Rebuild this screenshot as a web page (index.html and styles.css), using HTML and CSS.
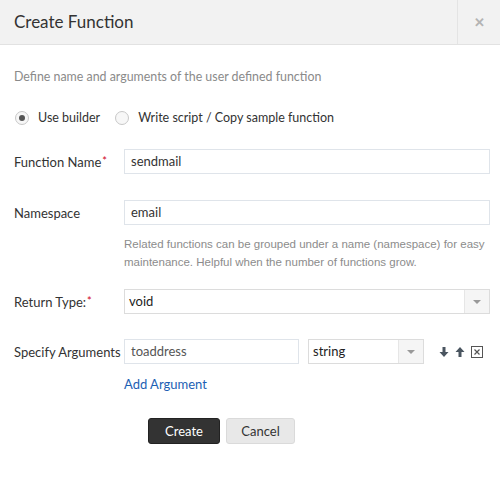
FILE: index.html
```html
<!DOCTYPE html>
<html lang="en">

<head>
  <meta charset="UTF-8" />
  <title>Create Function</title>
  <link rel="stylesheet" href="styles.css">
</head>

<body>

  <div class="dialog">
    <div class="dialog-header">
      <div class="dialog-title">Create Function</div>
      <div class="dialog-close">&#x2715;</div>
    </div>

    <div class="dialog-body">
      <p class="intro">Define name and arguments of the user defined function</p>

      <div class="radio-row">
        <label class="radio checked"><span class="radio-dot"></span>Use builder</label>
        <label class="radio"><span class="radio-dot"></span>Write script / Copy sample function</label>
      </div>

      <div class="field-row row-name">
        <div class="field-label">Function Name<span class="req">*</span></div>
        <div class="field-ctrl">
          <div class="text-input">sendmail</div>
        </div>
      </div>

      <div class="field-row row-ns">
        <div class="field-label">Namespace</div>
        <div class="field-ctrl">
          <div class="text-input">email</div>
          <div class="help">Related functions can be grouped under a name (namespace) for easy maintenance. Helpful when the number of functions grow.</div>
        </div>
      </div>

      <div class="field-row row-return">
        <div class="field-label">Return Type:<span class="req">*</span></div>
        <div class="field-ctrl">
          <div class="select">
            <span class="select-value">void</span>
            <span class="select-arrow"></span>
          </div>
        </div>
      </div>

      <div class="field-row row-args">
        <div class="field-label">Specify Arguments</div>
        <div class="field-ctrl">
          <div class="arg-line">
            <div class="text-input arg-name">toaddress</div>
            <div class="select arg-type">
              <span class="select-value">string</span>
              <span class="select-arrow"></span>
            </div>
            <div class="arg-tools">
              <svg width="10" height="10" viewBox="0 0 10 10"><path d="M3.5 0h3v5h3l-4.5 5-4.5-5h3z" fill="#4a5560"/></svg>
              <svg width="10" height="10" viewBox="0 0 10 10"><path d="M3.5 10h3v-5h3l-4.5-5-4.5 5h3z" fill="#4a5560"/></svg>
              <svg width="12" height="12" viewBox="0 0 12 12"><rect x="0.5" y="0.5" width="11" height="11" fill="#fff" stroke="#555"/><path d="M3.5 3.5l5 5M8.5 3.5l-5 5" stroke="#555" stroke-width="1.2"/></svg>
            </div>
          </div>
          <a class="add-arg" href="#">Add Argument</a>
        </div>
      </div>

      <div class="actions">
        <button class="btn btn-primary">Create</button>
        <button class="btn btn-default">Cancel</button>
      </div>
    </div>
  </div>

</body>

</html>
```

FILE: styles.css
```css
body {
  margin: 0;
  background: #fff;
  font-family: Lato, 'Open Sans', sans-serif;
  color: #333;
}

.dialog {
  width: 500px;
}

.dialog-header {
  display: flex;
  height: 44px;
  background: #f2f2f2;
  border-bottom: 1px solid #e2e2e2;
}

.dialog-title {
  flex: 1;
  padding-left: 14px;
  line-height: 44px;
  font-size: 17px;
  color: #333;
}

.dialog-close {
  width: 42px;
  border-left: 1px solid #e4e4e4;
  text-align: center;
  line-height: 44px;
  font-size: 13px;
  font-weight: bold;
  color: #b4b4b4;
}

.dialog-body {
  padding: 0 10px 0 14px;
}

.intro {
  margin: 24px 0 0;
  font-size: 12.4px;
  color: #8a8a8a;
}

.radio-row {
  display: flex;
  gap: 14px;
  margin-top: 26px;
  font-size: 12.5px;
}

.radio {
  display: flex;
  align-items: center;
  gap: 9px;
}

.radio-dot {
  width: 14px;
  height: 14px;
  border-radius: 50%;
  border: 1px solid #c8c8c8;
  background: #f7f7f7;
  box-sizing: border-box;
  position: relative;
  margin-left: 1px;
}

.radio.checked .radio-dot::after {
  content: "";
  position: absolute;
  left: 3px;
  top: 3px;
  width: 6px;
  height: 6px;
  border-radius: 50%;
  background: #555;
}

.field-row {
  display: flex;
}

.row-name {
  margin-top: 24px;
}

.row-ns {
  margin-top: 26px;
}

.row-return {
  margin-top: 18px;
}

.row-args {
  margin-top: 25px;
}

.field-label {
  width: 110px;
  flex: none;
  font-size: 13px;
  padding-top: 5px;
  white-space: nowrap;
}

.req {
  color: #d0021b;
  font-size: 11px;
  vertical-align: top;
  margin-left: 1px;
}

.field-ctrl {
  flex: 1;
}

.text-input {
  height: 25px;
  box-sizing: border-box;
  border: 1px solid #dfe4ea;
  padding: 0 6px;
  line-height: 23px;
  font-size: 13px;
  color: #333;
  background: #fff;
}

.help {
  margin-top: 10px;
  font-family: 'Liberation Sans', Arial, sans-serif;
  font-size: 11.5px;
  line-height: 18px;
  color: #8c8c8c;
}

.select {
  display: flex;
  height: 25px;
  box-sizing: border-box;
  border: 1px solid #dcdcdc;
  background: #fff;
}

.select-value {
  flex: 1;
  padding: 0 4px;
  line-height: 23px;
  font-size: 13px;
  color: #222;
}

.select-arrow {
  width: 24px;
  border-left: 1px solid #e6e6e6;
  background: #f5f5f5;
  position: relative;
}

.select-arrow::after {
  content: "";
  position: absolute;
  left: 8px;
  top: 10px;
  border-left: 4px solid transparent;
  border-right: 4px solid transparent;
  border-top: 4px solid #999;
}

.arg-line {
  display: flex;
  align-items: center;
}

.arg-name {
  width: 175px;
  color: #555;
}

.arg-type {
  width: 116px;
  margin-left: 9px;
}

.arg-tools {
  display: flex;
  align-items: center;
  gap: 6px;
  margin-left: 15px;
}

.add-arg {
  display: inline-block;
  margin-top: 12px;
  font-size: 13px;
  color: #1c5fb4;
  text-decoration: none;
}

.actions {
  display: flex;
  gap: 6px;
  margin-top: 26px;
  padding-left: 134px;
}

.btn {
  height: 26px;
  font-family: Lato, sans-serif;
  font-size: 13px;
  border-radius: 3px;
  padding: 0;
  cursor: pointer;
}

.btn-primary {
  width: 72px;
  background: #333;
  border: 1px solid #222;
  color: #fff;
}

.btn-default {
  width: 69px;
  background: #e8e8e8;
  border: 1px solid #dadada;
  color: #333;
}
```
